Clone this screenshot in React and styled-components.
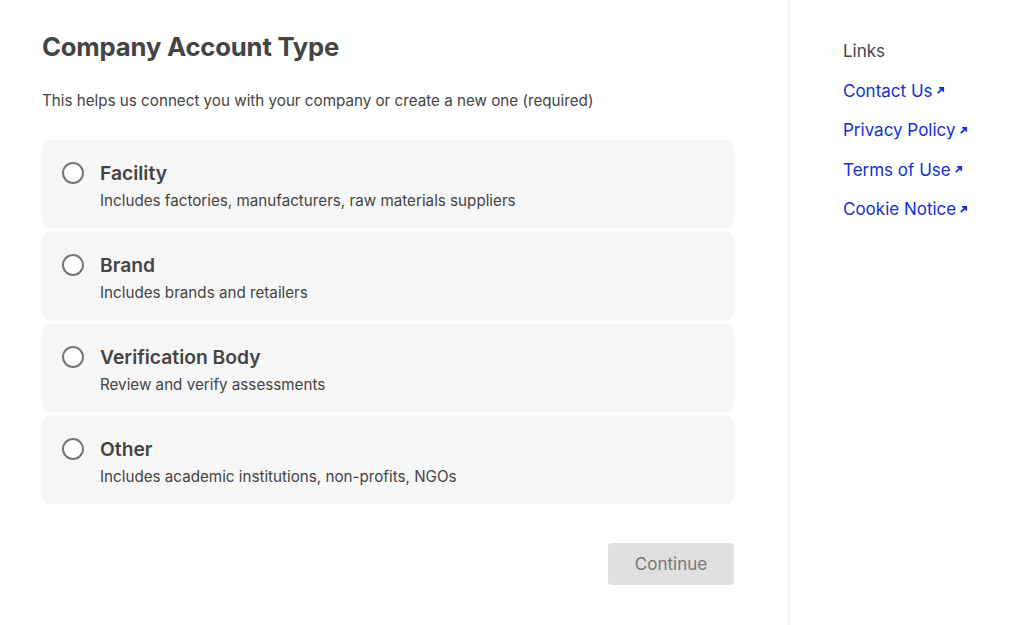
import React from 'react';
import styled, { createGlobalStyle } from 'styled-components';

const GlobalStyle = createGlobalStyle`
  html, body {
    margin: 0;
    padding: 0;
    background: #fff;
    font-family: Inter, "Noto Sans", sans-serif;
    color: #444;
  }
`;

const Page = styled.div`
  display: flex;
  width: 1024px;
  height: 625px;
  box-sizing: border-box;
`;

const Main = styled.main`
  width: 788px;
  box-sizing: border-box;
  padding: 30px 54px 0 42px;
`;

const Title = styled.h1`
  margin: 0;
  font-size: 25.7px;
  line-height: 34px;
  font-weight: 700;
  color: #444;
  letter-spacing: -0.2px;
`;

const Intro = styled.p`
  margin: 26px 0 0;
  font-size: 15.2px;
  line-height: 22px;
  color: #444;
`;

const OptionList = styled.div`
  display: flex;
  flex-direction: column;
  gap: 4px;
  margin-top: 28px;
`;

const Option = styled.label`
  display: flex;
  align-items: flex-start;
  gap: 16px;
  height: 88px;
  box-sizing: border-box;
  padding: 21px 20px 0 20px;
  background: #f7f7f7;
  border-radius: 8px;
  cursor: pointer;
`;

const Radio = styled.span`
  flex: none;
  width: 22px;
  height: 22px;
  box-sizing: border-box;
  border: 2px solid #777;
  border-radius: 50%;
  margin-top: 1px;
  background: #fff;
`;

const OptionText = styled.div`
  display: flex;
  flex-direction: column;
`;

const OptionTitle = styled.span`
  font-size: 19.3px;
  line-height: 24px;
  font-weight: 600;
  color: #444;
`;

const OptionDesc = styled.span`
  margin-top: 6px;
  font-size: 15.2px;
  line-height: 20px;
  color: #444;
`;

const Actions = styled.div`
  display: flex;
  justify-content: flex-end;
  margin-top: 39px;
`;

const Button = styled.button`
  width: 126px;
  height: 42px;
  border: none;
  border-radius: 4px;
  background: #e0e0e0;
  color: #777;
  font-family: inherit;
  font-size: 17px;
`;

const Sidebar = styled.aside`
  flex: 1;
  border-left: 2px solid #f3f3f3;
  padding: 39px 0 0 53px;
  display: flex;
  flex-direction: column;
  gap: 15.6px;
`;

const SideHeading = styled.div`
  font-size: 17px;
  line-height: 24px;
  color: #444;
`;

const SideLink = styled.a`
  display: inline-flex;
  align-items: center;
  gap: 3px;
  font-size: 17px;
  line-height: 24px;
  color: #1130d6;
  text-decoration: none;
`;

const Arrow = () => (
  <svg width="9" height="9" viewBox="0 0 10 10" aria-hidden="true">
    <path d="M2 8 L8 2 M3.5 2 H8 V6.5" stroke="#1130d6" strokeWidth="2" fill="none" />
  </svg>
);

const options = [
  { title: 'Facility', desc: 'Includes factories, manufacturers, raw materials suppliers' },
  { title: 'Brand', desc: 'Includes brands and retailers' },
  { title: 'Verification Body', desc: 'Review and verify assessments' },
  { title: 'Other', desc: 'Includes academic institutions, non-profits, NGOs' },
];

const links = ['Contact Us', 'Privacy Policy', 'Terms of Use', 'Cookie Notice'];

export default function App() {
  return (
    <>
      <GlobalStyle />
      <Page>
        <Main>
          <Title>Company Account Type</Title>
          <Intro>This helps us connect you with your company or create a new one (required)</Intro>
          <OptionList>
            {options.map((o) => (
              <Option key={o.title}>
                <Radio />
                <OptionText>
                  <OptionTitle>{o.title}</OptionTitle>
                  <OptionDesc>{o.desc}</OptionDesc>
                </OptionText>
              </Option>
            ))}
          </OptionList>
          <Actions>
            <Button>Continue</Button>
          </Actions>
        </Main>
        <Sidebar>
          <SideHeading>Links</SideHeading>
          {links.map((l) => (
            <SideLink href="#" key={l}>
              {l}
              <Arrow />
            </SideLink>
          ))}
        </Sidebar>
      </Page>
    </>
  );
}
